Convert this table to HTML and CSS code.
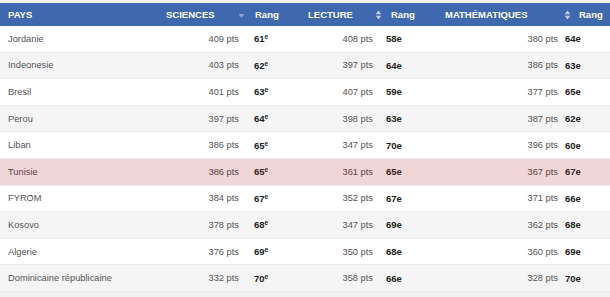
FILE: index.html
```html
<!DOCTYPE html>
<html lang="fr">
<head>
<meta charset="utf-8">
<title>PISA</title>
<link rel="stylesheet" href="styles.css">
</head>
<body>
<div class="table">
  <div class="head">
    <div class="h pays">PAYS</div>
    <div class="h t-sci">SCIENCES</div>
    <div class="h arr"><svg width="7" height="8" viewBox="0 0 7 8"><path d="M0.5 3 L6.5 3 L3.5 7 Z" fill="#8e9fd8"/></svg></div>
    <div class="h rang r-sci">Rang</div>
    <div class="h t-lec">LECTURE</div>
    <div class="h arr"><svg width="7" height="10" viewBox="0 0 7 10"><path d="M3.5 0.5 L6.3 4.3 L0.7 4.3 Z M3.5 9.5 L6.3 5.7 L0.7 5.7 Z" fill="#c3cde8"/></svg></div>
    <div class="h rang r-lec">Rang</div>
    <div class="h t-mat">MATHÉMATIQUES</div>
    <div class="h arr"><svg width="7" height="10" viewBox="0 0 7 10"><path d="M3.5 0.5 L6.3 4.3 L0.7 4.3 Z M3.5 9.5 L6.3 5.7 L0.7 5.7 Z" fill="#c3cde8"/></svg></div>
    <div class="h rang r-mat">Rang</div>
  </div>

  <div class="row">
    <div class="c pays">Jordanie</div><div class="c sc s-sci">409 pts</div><div class="c rk k-sci">61<sup>e</sup></div>
    <div class="c sc s-lec">408 pts</div><div class="c rk k-lec">58e</div>
    <div class="c sc s-mat">380 pts</div><div class="c rk k-mat">64e</div>
  </div>
  <div class="row alt">
    <div class="c pays">Indeonesie</div><div class="c sc s-sci">403 pts</div><div class="c rk k-sci">62<sup>e</sup></div>
    <div class="c sc s-lec">397 pts</div><div class="c rk k-lec">64e</div>
    <div class="c sc s-mat">386 pts</div><div class="c rk k-mat">63e</div>
  </div>
  <div class="row">
    <div class="c pays">Bresil</div><div class="c sc s-sci">401 pts</div><div class="c rk k-sci">63<sup>e</sup></div>
    <div class="c sc s-lec">407 pts</div><div class="c rk k-lec">59e</div>
    <div class="c sc s-mat">377 pts</div><div class="c rk k-mat">65e</div>
  </div>
  <div class="row alt">
    <div class="c pays">Perou</div><div class="c sc s-sci">397 pts</div><div class="c rk k-sci">64<sup>e</sup></div>
    <div class="c sc s-lec">398 pts</div><div class="c rk k-lec">63e</div>
    <div class="c sc s-mat">387 pts</div><div class="c rk k-mat">62e</div>
  </div>
  <div class="row">
    <div class="c pays">Liban</div><div class="c sc s-sci">386 pts</div><div class="c rk k-sci">65<sup>e</sup></div>
    <div class="c sc s-lec">347 pts</div><div class="c rk k-lec">70e</div>
    <div class="c sc s-mat">396 pts</div><div class="c rk k-mat">60e</div>
  </div>
  <div class="row hl">
    <div class="c pays">Tunisie</div><div class="c sc s-sci">386 pts</div><div class="c rk k-sci">65<sup>e</sup></div>
    <div class="c sc s-lec">361 pts</div><div class="c rk k-lec">65e</div>
    <div class="c sc s-mat">367 pts</div><div class="c rk k-mat">67e</div>
  </div>
  <div class="row">
    <div class="c pays">FYROM</div><div class="c sc s-sci">384 pts</div><div class="c rk k-sci">67<sup>e</sup></div>
    <div class="c sc s-lec">352 pts</div><div class="c rk k-lec">67e</div>
    <div class="c sc s-mat">371 pts</div><div class="c rk k-mat">66e</div>
  </div>
  <div class="row alt">
    <div class="c pays">Kosovo</div><div class="c sc s-sci">378 pts</div><div class="c rk k-sci">68<sup>e</sup></div>
    <div class="c sc s-lec">347 pts</div><div class="c rk k-lec">69e</div>
    <div class="c sc s-mat">362 pts</div><div class="c rk k-mat">68e</div>
  </div>
  <div class="row">
    <div class="c pays">Algerie</div><div class="c sc s-sci">376 pts</div><div class="c rk k-sci">69<sup>e</sup></div>
    <div class="c sc s-lec">350 pts</div><div class="c rk k-lec">68e</div>
    <div class="c sc s-mat">360 pts</div><div class="c rk k-mat">69e</div>
  </div>
  <div class="row alt">
    <div class="c pays">Dominicaine républicaine</div><div class="c sc s-sci">332 pts</div><div class="c rk k-sci">70<sup>e</sup></div>
    <div class="c sc s-lec">358 pts</div><div class="c rk k-lec">66e</div>
    <div class="c sc s-mat">328 pts</div><div class="c rk k-mat">70e</div>
  </div>
</div>
</body>
</html>
```

FILE: styles.css
```css
html, body {
  margin: 0;
  padding: 0;
}
body {
  width: 610px;
  height: 297px;
  overflow: hidden;
  background: #f2f2f2;
  font-family: "Liberation Sans", Arial, sans-serif;
  padding-top: 3px;
  box-sizing: border-box;
}
.table {
  width: 610px;
}
.head {
  display: grid;
  grid-template-columns: 160px 74px 14px 52px 72px 12px 56px 120px 14px 36px;
  height: 23px;
  align-items: center;
  background: #4068ae;
  color: #ffffff;
  font-size: 9.5px;
  font-weight: bold;
}
.h {
  white-space: nowrap;
}
.head .pays { padding-left: 8px; }
.t-sci { padding-left: 6px; }
.t-lec { padding-left: 8px; }
.t-mat { padding-left: 5px; }
.arr {
  display: flex;
  justify-content: center;
  align-items: center;
}
.r-sci { padding-left: 7px; }
.r-lec { padding-left: 7px; }
.r-mat { padding-left: 5px; }

.row {
  display: grid;
  grid-template-columns: 160px 86px 54px 80px 60px 122px 48px;
  height: 26.6px;
  align-items: center;
  background: #ffffff;
  border-bottom: 1px solid #ebebeb;
  box-sizing: border-box;
  font-size: 9.3px;
  color: #555555;
}
.row.alt { background: #f5f5f5; }
.row.hl { background: #f1d6d8; color: #5e4446; }
.c { white-space: nowrap; }
.row .pays { padding-left: 8px; }
.sc { text-align: right; }
.s-sci { padding-right: 7px; }
.s-lec { padding-right: 7px; }
.s-mat { padding-right: 4px; }
.rk {
  font-weight: bold;
  color: #222222;
  font-size: 9.5px;
}
.row.hl .rk { color: #3a2426; }
.k-sci { padding-left: 8px; }
.k-lec { padding-left: 6px; }
.k-mat { padding-left: 3px; }
.rk sup {
  font-size: 6.5px;
  vertical-align: 3px;
  line-height: 0;
}
```
